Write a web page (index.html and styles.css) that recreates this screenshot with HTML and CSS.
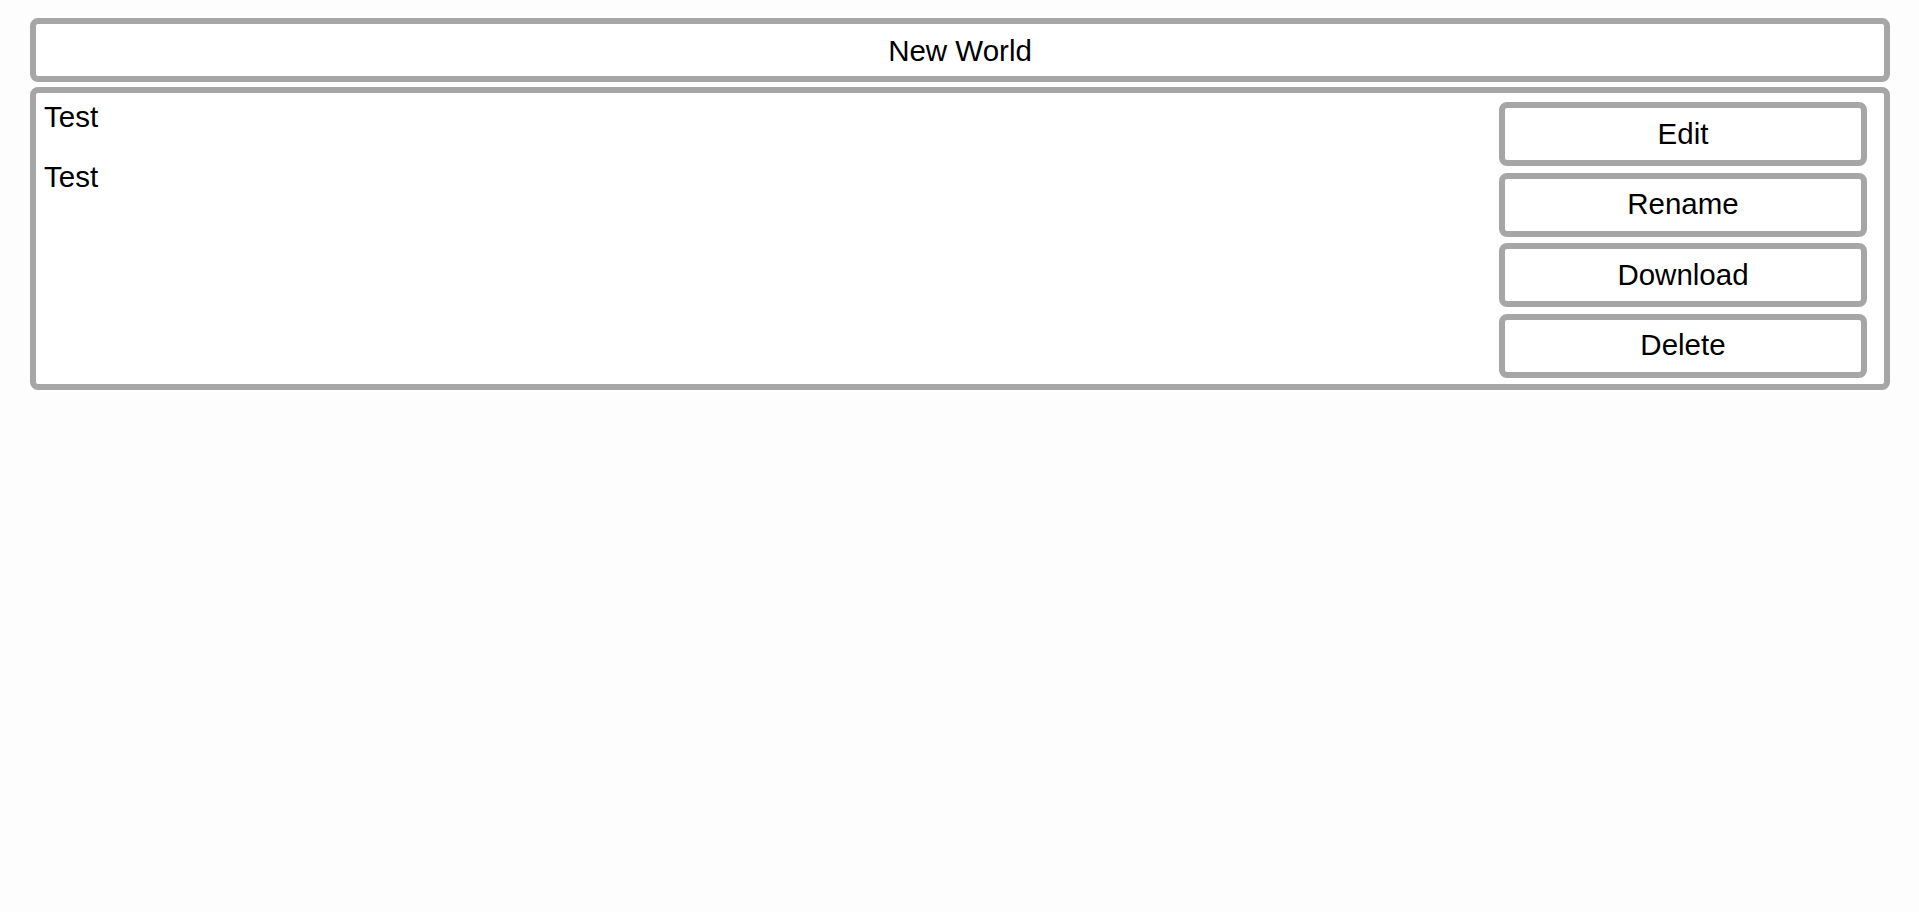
FILE: index.html
```html
<!DOCTYPE html>
<html>
<head>
<meta charset="utf-8">
<link rel="stylesheet" href="styles.css">
</head>
<body>
<div class="page">
  <div class="title-bar">New World</div>
  <div class="panel">
    <div class="items">
      <div class="item">Test</div>
      <div class="item">Test</div>
    </div>
    <div class="actions">
      <button class="btn">Edit</button>
      <button class="btn">Rename</button>
      <button class="btn">Download</button>
      <button class="btn">Delete</button>
    </div>
  </div>
</div>
</body>
</html>
```
FILE: styles.css
```css
html, body {
  margin: 0;
  padding: 0;
  background: #fdfdfd;
}
body {
  font-family: "Liberation Sans", Arial, sans-serif;
  font-size: 29.5px;
  color: #000;
}
.page {
  padding: 18px 29px 0 30px;
  display: flex;
  flex-direction: column;
  gap: 5px;
}
.title-bar {
  box-sizing: border-box;
  height: 64px;
  border: 6px solid #a6a6a6;
  border-radius: 8px;
  background: #fff;
  display: flex;
  align-items: center;
  justify-content: center;
  padding-top: 2px;
}
.panel {
  box-sizing: border-box;
  border: 6px solid #a6a6a6;
  border-radius: 8px;
  background: #fff;
  display: flex;
  padding: 0 17px 6px 8px;
}
.items {
  flex: 1;
  display: flex;
  flex-direction: column;
  gap: 27px;
  padding-top: 6.5px;
}
.item {
  line-height: 33px;
}
.actions {
  width: 368px;
  display: flex;
  flex-direction: column;
  gap: 6.5px;
  padding-top: 9px;
}
.btn {
  box-sizing: border-box;
  height: 64px;
  width: 100%;
  border: 6px solid #a6a6a6;
  border-radius: 8px;
  background: #fff;
  font-family: "Liberation Sans", Arial, sans-serif;
  font-size: 29.5px;
  color: #000;
  padding: 0 0 1px 0;
}
```
